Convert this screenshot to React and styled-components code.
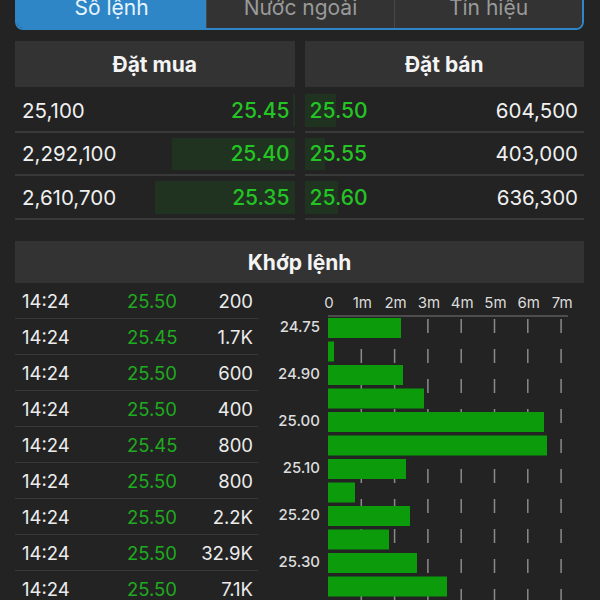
import React from 'react';
import styled, { createGlobalStyle } from 'styled-components';

const GlobalStyle = createGlobalStyle`
  body {
    margin: 0;
    background: #232323;
    font-family: Inter, "Liberation Sans", sans-serif;
    color: #f0f0f0;
    overflow: hidden;
  }
`;

const Page = styled.div`
  width: 600px;
  height: 600px;
  box-sizing: border-box;
  padding: 0 16px 0 15px;
  overflow: hidden;
`;

const Tabs = styled.div`
  margin-top: -16px;
  height: 46px;
  box-sizing: border-box;
  border: 2px solid #2f86c6;
  border-radius: 8px;
  overflow: hidden;
  display: grid;
  grid-template-columns: 189px 1fr 1fr;
`;

const Tab = styled.div`
  display: flex;
  align-items: center;
  justify-content: center;
  font-size: 21px;
  background: ${p => (p.$active ? '#2f86c6' : '#333333')};
  color: ${p => (p.$active ? '#e6f5ff' : '#9a9a9a')};
  & + & {
    border-left: ${p => (p.$active ? 'none' : '1px solid #474747')};
  }
`;

const TwoCols = styled.div`
  display: grid;
  grid-template-columns: 1fr 1fr;
  column-gap: 10px;
  margin-top: ${p => p.$top || 0}px;
`;

const HeaderPanel = styled.div`
  height: ${p => p.$h || 46}px;
  background: #333333;
  display: flex;
  align-items: center;
  justify-content: center;
  font-weight: 700;
  font-size: 21px;
  color: #f4f4f4;
  margin-top: ${p => p.$top || 0}px;
`;

const BookSide = styled.div`
  display: flex;
  flex-direction: column;
  padding-top: 2px;
`;

const BookRow = styled.div`
  position: relative;
  box-sizing: border-box;
  height: 43.5px;
  border-bottom: 2px solid #393939;
  display: flex;
  align-items: center;
  justify-content: space-between;
  padding: ${p => (p.$sell ? '1px 6px 0 5px' : '1px 5px 0 7px')};
  font-size: 20.5px;
`;

const VolBar = styled.div`
  position: absolute;
  top: 5px;
  bottom: 4px;
  ${p => (p.$sell ? 'left: 0;' : 'right: 0;')}
  background: #1f3320;
`;

const Qty = styled.span`
  position: relative;
  color: #f0f0f0;
`;

const Price = styled.span`
  position: relative;
  color: #25c425;
  font-weight: 500;
  font-size: 21px;
`;

const Trades = styled.div`
  display: grid;
  grid-template-columns: 245px 1fr;
`;

const TradeList = styled.div`
  display: flex;
  flex-direction: column;
`;

const TradeRow = styled.div`
  box-sizing: border-box;
  height: 36px;
  border-bottom: 1px solid #383838;
  margin-right: 2px;
  display: grid;
  grid-template-columns: 105px 70px 1fr;
  align-items: center;
  padding: 0 5px 0 7px;
  font-size: 18.5px;
`;

const Time = styled.span`
  color: #ececec;
`;

const TradePrice = styled.span`
  color: #1faa1f;
`;

const TradeVol = styled.span`
  color: #ececec;
  text-align: right;
`;

const ChartBox = styled.div`
  height: 320px;
`;

const trades = [
  ['14:24', '25.50', '200'],
  ['14:24', '25.45', '1.7K'],
  ['14:24', '25.50', '600'],
  ['14:24', '25.50', '400'],
  ['14:24', '25.45', '800'],
  ['14:24', '25.50', '800'],
  ['14:24', '25.50', '2.2K'],
  ['14:24', '25.50', '32.9K'],
  ['14:24', '25.50', '7.1K'],
];

const buys = [
  ['25,100', '25.45', 2],
  ['2,292,100', '25.40', 123],
  ['2,610,700', '25.35', 140],
];

const sells = [
  ['25.50', '604,500', 31],
  ['25.55', '403,000', 20],
  ['25.60', '636,300', 33],
];

// bar widths in px from the chart's zero line
const bars = [73, 6, 75, 96, 216, 219, 78, 27, 82, 61, 89, 119, 79];
const yLabels = { 0: '24.75', 2: '24.90', 4: '25.00', 6: '25.10', 8: '25.20', 10: '25.30' };

const VolumeChart = () => {
  const x0 = 68;
  const step = 33.3;
  const axisY = 33;
  return (
    <svg width="324" height="320" viewBox="0 0 324 320">
      {[0, 1, 2, 3, 4, 5, 6, 7].map(i => (
        <text
          key={i}
          x={x0 + 1 + i * step}
          y={21}
          fill="#dcdcdc"
          fontSize="15"
          fontFamily="Inter, 'Liberation Sans', sans-serif"
          textAnchor="middle"
          dominantBaseline="middle"
        >
          {i === 0 ? '0' : `${i}m`}
        </text>
      ))}
      <line x1={x0} y1={axisY} x2={x0 + 240} y2={axisY} stroke="#5c5c5c" strokeWidth="1.5" />
      {[1, 2, 3, 4, 5, 6, 7].map(i => (
        <line
          key={i}
          x1={x0 + i * step}
          y1={axisY + 3}
          x2={x0 + i * step}
          y2={320}
          stroke="#8a8a8a"
          strokeWidth="1.5"
          strokeDasharray="14 16"
        />
      ))}
      {bars.map((w, i) => (
        <rect key={i} x={x0} y={35 + i * 23.5} width={w} height={20} fill="#0b9b0b" />
      ))}
      {Object.entries(yLabels).map(([i, t]) => (
        <text
          key={t}
          x={60}
          y={45 + i * 23.5}
          fill="#dcdcdc"
          fontSize="15"
          fontWeight="500"
          fontFamily="Inter, 'Liberation Sans', sans-serif"
          textAnchor="end"
          dominantBaseline="middle"
        >
          {t}
        </text>
      ))}
    </svg>
  );
};

const App = () => (
  <Page>
    <GlobalStyle />
    <Tabs>
      <Tab $active>Sổ lệnh</Tab>
      <Tab>Nước ngoài</Tab>
      <Tab>Tín hiệu</Tab>
    </Tabs>

    <TwoCols $top={11}>
      <HeaderPanel>Đặt mua</HeaderPanel>
      <HeaderPanel>Đặt bán</HeaderPanel>
    </TwoCols>

    <TwoCols>
      <BookSide>
        {buys.map(([q, p, w]) => (
          <BookRow key={p}>
            <VolBar style={{ width: w }} />
            <Qty>{q}</Qty>
            <Price>{p}</Price>
          </BookRow>
        ))}
      </BookSide>
      <BookSide>
        {sells.map(([p, q, w]) => (
          <BookRow key={p} $sell>
            <VolBar $sell style={{ width: w }} />
            <Price>{p}</Price>
            <Qty>{q}</Qty>
          </BookRow>
        ))}
      </BookSide>
    </TwoCols>

    <HeaderPanel $top={21.5} $h={42}>Khớp lệnh</HeaderPanel>

    <Trades>
      <TradeList>
        {trades.map(([t, p, v], i) => (
          <TradeRow key={i}>
            <Time>{t}</Time>
            <TradePrice>{p}</TradePrice>
            <TradeVol>{v}</TradeVol>
          </TradeRow>
        ))}
      </TradeList>
      <ChartBox>
        <VolumeChart />
      </ChartBox>
    </Trades>
  </Page>
);

export default App;
